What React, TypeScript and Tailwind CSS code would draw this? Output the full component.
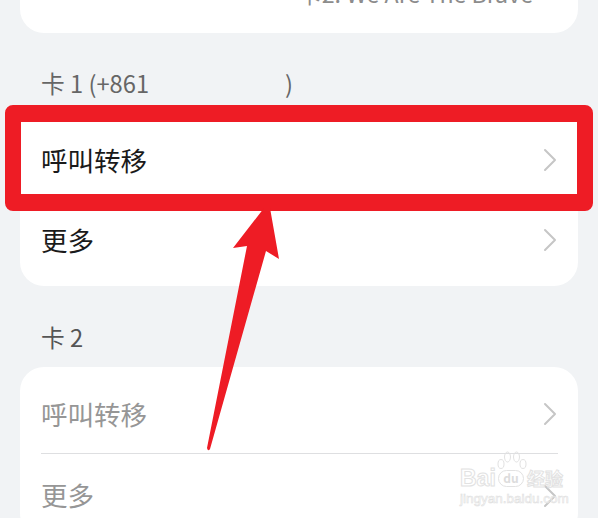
import React from "react";

const font = "font-['Noto_Sans_CJK_SC','Noto_Sans',sans-serif]";

const Chevron = () => (
  <svg width="14" height="24" viewBox="0 0 14 24" fill="none" className="shrink-0">
    <path d="M2 2 L12 12 L2 22" stroke="#c6c6c6" strokeWidth="2" strokeLinecap="round" strokeLinejoin="round" />
  </svg>
);

const Row = ({ label, dim, height }: { label: string; dim?: boolean; height: string }) => (
  <div className={`flex items-center justify-between pl-[21px] pr-[21px] ${height}`}>
    <span className={`text-[26.5px] leading-none ${dim ? "text-[#969696]" : "text-[#1a1a1a]"}`}>{label}</span>
    <Chevron />
  </div>
);

const Watermark = () => (
  <div className="absolute left-[460px] top-[466px] flex w-[105px] flex-col">
    <div className="flex h-[24px] items-center leading-none text-white/60">
      <span className="w-[38px] text-[23px] font-bold font-['Liberation_Sans',sans-serif] [-webkit-text-stroke:1px_#e2e2e2]">Bai</span>
      <span className="relative flex h-[17px] w-[26px] items-center justify-center rounded-full border border-[#e2e2e2] text-[12px] font-bold text-[#dcdcdc]">
        du
        <svg width="30" height="20" viewBox="0 0 30 20" className="absolute left-[-2px] top-[-20px]" fill="none" stroke="#e2e2e2" strokeWidth="1">
          <ellipse cx="10.5" cy="6" rx="3" ry="5" />
          <ellipse cx="19.5" cy="6" rx="3" ry="5" />
          <ellipse cx="4" cy="13" rx="3" ry="4.5" />
          <ellipse cx="26" cy="13" rx="3" ry="4.5" />
        </svg>
      </span>
      <span className="ml-[3px] whitespace-nowrap text-[18px] font-bold [-webkit-text-stroke:1px_#e2e2e2]">经验</span>
    </div>
    <span className="mt-[2px] whitespace-nowrap text-[13.5px] leading-[14px] text-white/60 font-['Liberation_Sans',sans-serif] [-webkit-text-stroke:0.6px_#e0e0e0]">jingyan.baidu.com</span>
  </div>
);

export default function App() {
  return (
    <div className={`relative h-[518px] w-[598px] overflow-hidden bg-[#f1f3f5] ${font}`}>
      <div className="flex flex-col px-[20px]">
        <div className="flex h-[33px] justify-end overflow-hidden rounded-b-[24px] bg-white pr-[45px]">
          <span className="-mt-[22px] h-[30px] text-[23.2px] leading-[30px] text-[#8c8c8c]">卡2: We Are The Brave</span>
        </div>

        <div className="ml-[21px] mt-[36px] h-[28px] text-[23.7px] leading-[28px] text-[#666]">
          卡 1 (+861<span className="ml-[136px]">)</span>
        </div>

        <div className="mt-[8px] flex h-[181px] flex-col overflow-hidden rounded-[24px] bg-white pt-[15px]">
          <Row label="呼叫转移" height="h-[80px]" />
          <Row label="更多" height="h-[80px]" />
        </div>

        <div className="ml-[21px] mt-[37px] h-[28px] text-[23.7px] leading-[28px] text-[#555]">卡 2</div>

        <div className="mt-[16px] flex h-[170px] flex-col rounded-[24px] bg-white">
          <Row label="呼叫转移" dim height="h-[86px] pt-[8px]" />
          <div className="ml-[21px] mr-[20px] h-px bg-[#dedfe1]" />
          <Row label="更多" dim height="h-[83px]" />
        </div>
      </div>

      {/* red annotation box */}
      <div className="absolute left-[5px] top-[105px] h-[106px] w-[588px] rounded-[8px] border-x-[16px] border-y-[17px] border-[#ee1c25]" />

      {/* arrow */}
      <svg className="absolute left-0 top-0" width="598" height="518" viewBox="0 0 598 518">
        <path
          d="M264 208 L270 208 L279 259 L266 251 L210 449 Q208 452 207 448 L247 246 L233 248 Z"
          fill="#ee1c25"
        />
      </svg>

      <Watermark />
    </div>
  );
}
